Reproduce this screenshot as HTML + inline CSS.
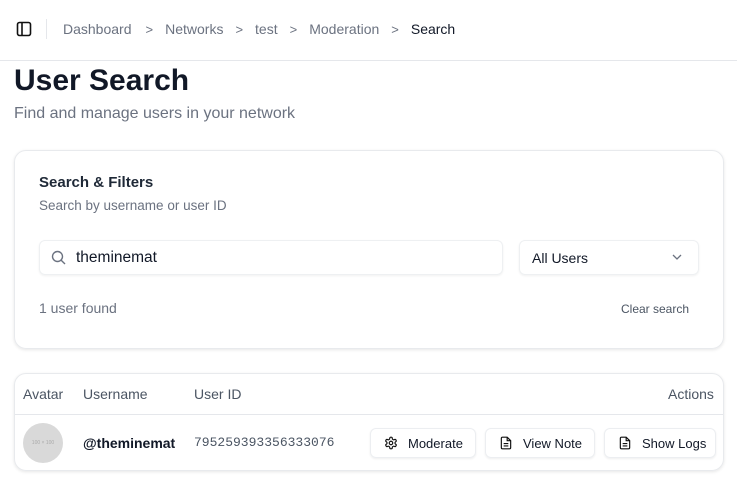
<!DOCTYPE html><html><head><style>
*{box-sizing:border-box;margin:0;padding:0}
body{width:737px;height:481px;overflow:hidden;background:#fff;font-family:"Liberation Sans",sans-serif;color:#111827;position:relative}
.a{position:absolute;white-space:nowrap}
.card{position:absolute;border:1px solid #e8eaed;border-radius:12px;box-shadow:0 1px 3px rgba(0,0,0,.1)}
.box{position:absolute;border:1px solid #eef0f2;border-radius:6px;box-shadow:0 1px 2px rgba(0,0,0,.06)}
.btn{position:absolute;top:428px;height:30px;border:1px solid #eceef1;border-radius:6px;box-shadow:0 1px 2px rgba(0,0,0,.07);font-size:13px;display:flex;align-items:center;padding-left:13px;gap:10px}
.g{color:#6b7280}
.c{display:inline-block;margin:0 12px;font-size:13px}
</style></head><body>
<svg class="a" style="left:16px;top:21px" width="16" height="16" viewBox="0 0 16 16" fill="none" stroke="#111" stroke-width="1.6"><rect x="1.5" y="1.5" width="13" height="13" rx="2"/><line x1="6" y1="2" x2="6" y2="14"/></svg>
<div class="a" style="left:46px;top:19px;width:1px;height:20px;background:#e5e7eb"></div>
<div class="a g" style="left:63px;top:21px;font-size:14px">Dashboard<span class="c" style="margin-left:14px">&gt;</span>Networks<span class="c">&gt;</span>test<span class="c">&gt;</span>Moderation<span class="c">&gt;</span><span style="color:#111827">Search</span></div>
<div class="a" style="left:0;top:60px;width:737px;height:1px;background:#e5e7eb"></div>
<div class="a" style="left:14px;top:64px;font-size:30px;font-weight:bold">User Search</div>
<div class="a g" style="left:14px;top:105px;font-size:16px">Find and manage users in your network</div>
<div class="card" style="left:14px;top:150px;width:710px;height:199px"></div>
<div class="a" style="left:39px;top:174px;font-size:15px;font-weight:bold;color:#1f2937">Search &amp; Filters</div>
<div class="a g" style="left:39px;top:198px;font-size:13.5px">Search by username or user ID</div>
<div class="box" style="left:39px;top:240px;width:464px;height:35px"></div>
<svg class="a" style="left:51px;top:250px" width="15" height="15" viewBox="0 0 15 15" fill="none" stroke="#6b7280" stroke-width="1.4"><circle cx="6.5" cy="6.5" r="5"/><line x1="10.2" y1="10.2" x2="14" y2="14"/></svg>
<div class="a" style="left:76px;top:249px;font-size:15.5px">theminemat</div>
<div class="box" style="left:519px;top:240px;width:180px;height:35px"></div>
<div class="a" style="left:532px;top:250px;font-size:14px">All Users</div>
<svg class="a" style="left:672px;top:254px" width="10" height="7" viewBox="0 0 10 7" fill="none" stroke="#6b7280" stroke-width="1.3"><path d="M1 1l4 4 4-4"/></svg>
<div class="a g" style="left:39px;top:300px;font-size:14px">1 user found</div>
<div class="a" style="left:621px;top:302px;font-size:12px;color:#4b5563">Clear search</div>
<div class="card" style="left:14px;top:373px;width:710px;height:98px"></div>
<div class="a" style="left:15px;top:414px;width:708px;height:1px;background:#e5e7eb"></div>
<div class="a g" style="left:23px;top:386px;font-size:14px;color:#4b5563">Avatar</div>
<div class="a g" style="left:83px;top:386px;font-size:14px;color:#4b5563">Username</div>
<div class="a g" style="left:194px;top:386px;font-size:14px;color:#4b5563">User ID</div>
<div class="a g" style="left:668px;top:386px;font-size:14px;color:#4b5563">Actions</div>
<div class="a" style="left:23px;top:423px;width:40px;height:40px;border-radius:50%;background:#d9d9d9;font-size:5px;color:#aaa;text-align:center;line-height:40px">100 × 100</div>
<div class="a" style="left:83px;top:435px;font-size:14px;font-weight:bold">@theminemat</div>
<div class="a" style="left:194px;top:435px;font-size:13px;font-family:'Liberation Mono',monospace;color:#4b5563">795259393356333076</div>
<div class="btn" style="left:370px;width:106px"><svg width="14" height="14" viewBox="0 0 24 24" fill="none" stroke="#111" stroke-width="2"><path d="M12.2 2h-.4a2 2 0 0 0-2 2v.2a2 2 0 0 1-1 1.7l-.4.3a2 2 0 0 1-2 0l-.2-.1a2 2 0 0 0-2.7.7l-.2.4a2 2 0 0 0 .7 2.7l.2.1a2 2 0 0 1 1 1.7v.5a2 2 0 0 1-1 1.700l-.2.1a2 2 0 0 0-.7 2.7l.2.4a2 2 0 0 0 2.7.7l.2-.1a2 2 0 0 1 2 0l.4.3a2 2 0 0 1 1 1.7v.2a2 2 0 0 0 2 2h.4a2 2 0 0 0 2-2v-.2a2 2 0 0 1 1-1.7l.4-.3a2 2 0 0 1 2 0l.2.1a2 2 0 0 0 2.7-.7l.2-.4a2 2 0 0 0-.7-2.7l-.2-.1a2 2 0 0 1-1-1.7v-.5a2 2 0 0 1 1-1.7l.2-.1a2 2 0 0 0 .7-2.7l-.2-.4a2 2 0 0 0-2.7-.7l-.2.1a2 2 0 0 1-2 0l-.4-.3a2 2 0 0 1-1-1.7V4a2 2 0 0 0-2-2z"/><circle cx="12" cy="12" r="3"/></svg>Moderate</div>
<div class="btn" style="left:485px;width:110px"><svg width="14" height="14" viewBox="0 0 24 24" fill="none" stroke="#111" stroke-width="2"><path d="M14 2H6a2 2 0 0 0-2 2v16a2 2 0 0 0 2 2h12a2 2 0 0 0 2-2V8z"/><path d="M14 2v6h6M8 13h8M8 17h8"/></svg>View Note</div>
<div class="btn" style="left:604px;width:112px"><svg width="14" height="14" viewBox="0 0 24 24" fill="none" stroke="#111" stroke-width="2"><path d="M14 2H6a2 2 0 0 0-2 2v16a2 2 0 0 0 2 2h12a2 2 0 0 0 2-2V8z"/><path d="M14 2v6h6M8 13h8M8 17h8"/></svg>Show Logs</div>
</body></html>
